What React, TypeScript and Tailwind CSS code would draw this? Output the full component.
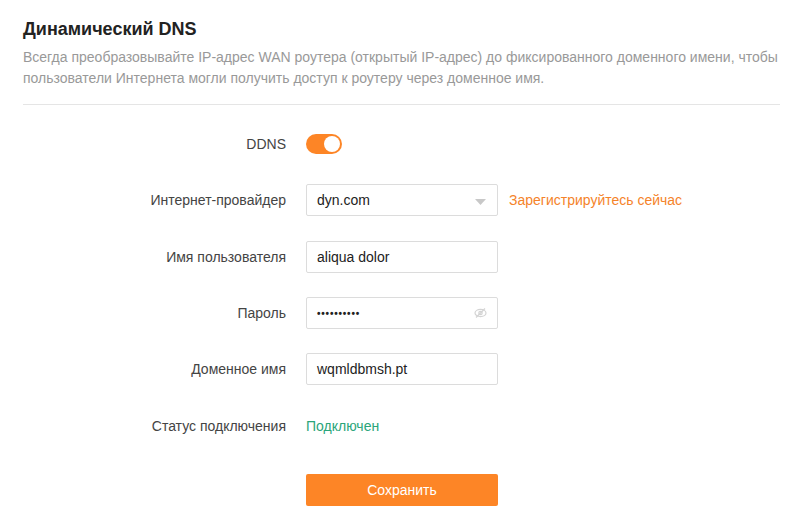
import React from "react";

const Label = ({ children }: { children: React.ReactNode }) => (
  <div className="w-[286px] shrink-0 text-right text-[14px] text-[#444]">{children}</div>
);

const Row = ({ label, children, className = "" }: { label: string; children: React.ReactNode; className?: string }) => (
  <div className={`flex h-[32px] items-center gap-[20px] ${className}`}>
    <Label>{label}</Label>
    {children}
  </div>
);

const Input = ({ children, className = "" }: { children?: React.ReactNode; className?: string }) => (
  <div className={`relative flex h-[32px] w-[192px] items-center rounded-[2px] border border-[#dcdcdc] bg-white px-[10px] text-[14px] text-[#222] ${className}`}>
    {children}
  </div>
);

export default function App() {
  return (
    <div className="min-h-[529px] w-[810px] bg-white font-['Liberation_Sans',Arial,sans-serif]">
      <div className="pl-[23px] pr-[30px] pt-[17px]">
        <h1 className="text-[18px] font-bold leading-[24px] text-[#222]">Динамический DNS</h1>
        <p className="mt-[6px] text-[14px] leading-[21px] text-[#999]">
          Всегда преобразовывайте IP-адрес WAN роутера (открытый IP-адрес) до фиксированного доменного имени, чтобы
          <br />
          пользователи Интернета могли получить доступ к роутеру через доменное имя.
        </p>
        <div className="mt-[15px] h-px bg-[#e5e5e5]" />
      </div>

      <div className="mt-[23px] flex flex-col gap-[24px]">
        <Row label="DDNS">
          <div className="relative h-[20px] w-[36px] rounded-full bg-[#fd8526]">
            <div className="absolute right-[2px] top-[2px] h-[16px] w-[16px] rounded-full bg-white" />
          </div>
        </Row>
        <Row label="Интернет-провайдер" className="mb-[1px]">
          <Input>
            <span>dyn.com</span>
            <svg className="absolute right-[11px] top-[14px]" width="11" height="6" viewBox="0 0 11 6">
              <path d="M0 0 L11 0 L5.5 6 Z" fill="#c8c8c8" />
            </svg>
          </Input>
          <span className="ml-[-9px] text-[14px] text-[#f5832a]">Зарегистрируйтесь сейчас</span>
        </Row>
        <Row label="Имя пользователя">
          <Input>aliqua dolor</Input>
        </Row>
        <Row label="Пароль">
          <Input>
            <span className="text-[10px] font-bold tracking-[0.8px]">••••••••••</span>
            <svg className="absolute right-[10px] top-[9px]" width="13" height="12" viewBox="0 0 13 12" fill="none" stroke="#d4d4d4" strokeWidth="1.2">
              <ellipse cx="6.5" cy="6" rx="5.5" ry="3.6" />
              <circle cx="6.5" cy="6" r="1.7" />
              <line x1="2" y1="10.5" x2="11" y2="1.5" />
            </svg>
          </Input>
        </Row>
        <Row label="Доменное имя">
          <Input>wqmldbmsh.pt</Input>
        </Row>
        <Row label="Статус подключения" className="mt-[1px]">
          <span className="text-[14px] text-[#2aa57a]">Подключен</span>
        </Row>
        <div className="mt-[8px] flex gap-[20px]">
          <div className="w-[286px] shrink-0" />
          <button className="h-[32px] w-[192px] rounded-[2px] bg-[#fd8526] text-[14px] text-white">Сохранить</button>
        </div>
      </div>
    </div>
  );
}
